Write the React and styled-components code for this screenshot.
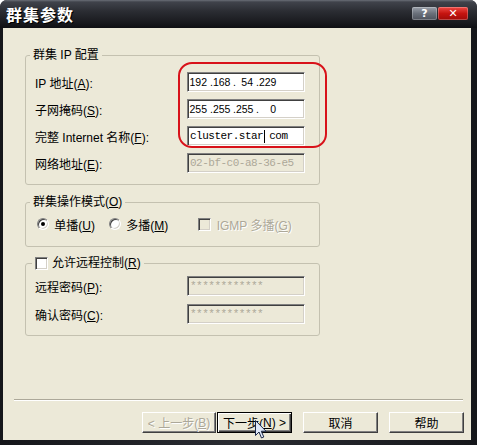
import React from 'react';
import styled, { createGlobalStyle } from 'styled-components';

const GlobalStyle = createGlobalStyle`
  html, body {
    margin: 0;
    padding: 0;
    background: #ffffff;
  }
`;

const Window = styled.div`
  position: relative;
  width: 477px;
  height: 445px;
  display: flex;
  flex-direction: column;
  background: linear-gradient(90deg, #15161a 0, #2a2c32 50%, #15161a 100%);
  border-radius: 7px 7px 0 0;
  overflow: hidden;
  font-family: "Liberation Sans", "Noto Sans CJK SC", sans-serif;
  font-size: 12px;
  color: #000;
`;

const TitleBar = styled.div`
  height: 28px;
  flex: none;
  display: flex;
  align-items: center;
  justify-content: space-between;
  padding: 0 9px 0 6px;
  background: linear-gradient(#6a6e77 0, #40434b 2px, #2b2d33 40%, #17181c 85%, #0f1013 100%);
`;

const Title = styled.div`
  color: #fff;
  font-family: "Noto Sans CJK SC", sans-serif;
  font-weight: bold;
  font-size: 16px;
  letter-spacing: 1px;
  text-shadow: 1px 1px 0 #000;
`;

const Controls = styled.div`
  display: flex;
  gap: 1px;
  margin-top: -2px;
`;

const CtlButton = styled.div`
  width: ${p => p.$w}px;
  height: 13px;
  display: flex;
  align-items: center;
  justify-content: center;
  border-radius: 2px;
  color: #fff;
  font-family: "DejaVu Sans", sans-serif;
  font-weight: bold;
  font-size: 11px;
  background: ${p =>
    p.$red
      ? 'linear-gradient(#f04a44, #c51410 50%, #a00a08)'
      : 'linear-gradient(#9aa0aa, #6a707a 50%, #4e535c)'};
  box-shadow: inset 0 0 0 1px rgba(255, 255, 255, 0.25);
`;

const Body = styled.div`
  flex: 1;
  margin: 0 6px 5px 3px;
  background: #ece9d8;
  display: flex;
  flex-direction: column;
  padding: 20px 0 7px 0;
`;

const Group = styled.fieldset`
  margin: ${p => p.$top}px 0 0 22px;
  width: 295px;
  box-sizing: border-box;
  border: 1px solid #c4c1b0;
  border-radius: 3px;
  padding: ${p => p.$pad};
  min-inline-size: auto;
`;

const Legend = styled.legend`
  display: flex;
  align-items: center;
  gap: 4px;
  line-height: 14px;
  height: 14px;
  padding: 0 3px;
  margin-left: ${p => p.$inset}px;
  white-space: pre;
`;

const FormGrid = styled.div`
  display: grid;
  grid-template-columns: 152px 118px;
  grid-auto-rows: 20px;
  row-gap: ${p => p.$gap}px;
  align-items: center;
`;

const Label = styled.div`
  white-space: pre;
`;

const Field = styled.div`
  height: 20px;
  box-sizing: border-box;
  border: 1px solid;
  border-color: #808080 #ffffff #ffffff #808080;
  box-shadow: inset 1px 1px #404040, inset -1px -1px #d4d0c8;
  background: ${p => (p.$disabled ? '#ece9d8' : '#ffffff')};
  color: ${p => (p.$disabled ? '#aca899' : '#000')};
  display: flex;
  align-items: center;
  padding: 0 2px;
  white-space: pre;
  font-family: ${p => (p.$mono ? '"Liberation Mono", monospace' : '"Liberation Sans", sans-serif')};
  font-size: ${p => (p.$mono ? 11 : 10.5)}px;
  letter-spacing: ${p => (p.$mono ? '-0.5px' : '0')};
`;

const IpSeg = styled.span`
  flex: none;
  width: ${p => (p.$first ? 20 : 23)}px;
  box-sizing: border-box;
  padding-right: 3px;
  display: flex;
  justify-content: ${p => (p.$first ? 'flex-end' : 'space-between')};
`;

const Caret = styled.span`
  display: inline-block;
  width: 1px;
  height: 13px;
  background: #000;
  margin: 0 4px 0 1px;
`;

const OptionRow = styled.div`
  display: flex;
  align-items: center;
  height: 14px;
`;

const Option = styled.label`
  display: flex;
  align-items: center;
  gap: 2px;
  margin-left: ${p => p.$left || 0}px;
  color: ${p => (p.$disabled ? '#aca899' : '#000')};
  text-shadow: ${p => (p.$disabled ? '1px 1px 0 #fff' : 'none')};
  white-space: pre;
`;

const Radio = styled.span`
  position: relative;
  width: 12px;
  height: 12px;
  box-sizing: border-box;
  border-radius: 50%;
  border: 1px solid;
  border-color: #808080 #ffffff #ffffff #808080;
  box-shadow: inset 1px 1px #404040, inset -1px -1px #d4d0c8;
  background: #fff;
  &::after {
    content: '';
    display: ${p => (p.$checked ? 'block' : 'none')};
    position: absolute;
    left: 3px;
    top: 3px;
    width: 4px;
    height: 4px;
    border-radius: 50%;
    background: #000;
  }
`;

const Check = styled.span`
  width: 13px;
  height: 13px;
  box-sizing: border-box;
  border: 1px solid;
  border-color: #808080 #ffffff #ffffff #808080;
  box-shadow: inset 1px 1px #404040, inset -1px -1px #d4d0c8;
  background: ${p => (p.$disabled ? '#ece9d8' : '#fff')};
`;

const Footer = styled.div`
  margin-top: auto;
  display: flex;
  flex-direction: column;
`;

const Separator = styled.div`
  margin: 0 8px 0 11px;
  border-top: 1px solid #aca899;
  border-bottom: 1px solid #fff;
`;

const ButtonRow = styled.div`
  display: flex;
  justify-content: flex-end;
  padding-right: 7px;
  margin-top: 11px;
`;

const Button = styled.div`
  width: ${p => p.$w || 75}px;
  height: 21px;
  box-sizing: border-box;
  margin-left: ${p => p.$gap || 0}px;
  display: flex;
  align-items: center;
  justify-content: center;
  background: #ece9d8;
  white-space: pre;
  border: 1px solid;
  border-color: ${p => (p.$default ? '#000' : '#fff #404040 #404040 #fff')};
  box-shadow: ${p =>
    p.$default
      ? 'inset 1px 1px #fff, inset -1px -1px #404040, inset -2px -2px #808080'
      : 'inset -1px -1px #808080'};
  color: ${p => (p.$disabled ? '#aca899' : '#000')};
  text-shadow: ${p => (p.$disabled ? '1px 1px 0 #fff' : 'none')};
`;

const Highlight = styled.div`
  position: absolute;
  left: 178px;
  top: 62px;
  width: 149px;
  height: 86px;
  box-sizing: border-box;
  border: 2px solid #d8121a;
  border-radius: 14px;
  pointer-events: none;
`;

const Pointer = styled.svg`
  position: absolute;
  left: 255px;
  top: 420px;
`;

function IpField({ parts }) {
  return (
    <Field>
      {parts.map((p, i) => (
        <IpSeg key={i} $first={i === 0}>
          {i > 0 && <span>.</span>}
          <span>{p}</span>
        </IpSeg>
      ))}
    </Field>
  );
}

export default function App() {
  return (
    <>
      <GlobalStyle />
      <Window>
        <TitleBar>
          <Title>群集参数</Title>
          <Controls>
            <CtlButton $w={25}>?</CtlButton>
            <CtlButton $w={30} $red>✕</CtlButton>
          </Controls>
        </TitleBar>
        <Body>
          <Group $top={0} $pad="10px 9px 11px 9px">
            <Legend $inset={-5}>群集 IP 配置</Legend>
            <FormGrid $gap={7}>
              <Label>IP 地址(<u>A</u>):</Label>
              <IpField parts={['192', '168', '54', '229']} />
              <Label>子网掩码(<u>S</u>):</Label>
              <IpField parts={['255', '255', '255', '0']} />
              <Label>完整 Internet 名称(<u>F</u>):</Label>
              <Field $mono>
                cluster.star<Caret />com
              </Field>
              <Label>网络地址(<u>E</u>):</Label>
              <Field $mono $disabled>02-bf-c0-a8-36-e5</Field>
            </FormGrid>
          </Group>

          <Group $top={10} $pad="8px 9px 15px 11px">
            <Legend $inset={-7}>
              <span>群集操作模式(<u>O</u>)</span>
            </Legend>
            <OptionRow>
              <Option>
                <Radio $checked />
                <span> 单播(<u>U</u>)</span>
              </Option>
              <Option $left={14}>
                <Radio />
                <span> 多播(<u>M</u>)</span>
              </Option>
              <Option $left={30} $disabled>
                <Check $disabled />
                <span> IGMP 多播(<u>G</u>)</span>
              </Option>
            </OptionRow>
          </Group>

          <Group $top={9} $pad="6px 9px 11px 9px">
            <Legend $inset={-3}>
              <Check />
              <span>允许远程控制(<u>R</u>)</span>
            </Legend>
            <FormGrid $gap={8}>
              <Label>远程密码(<u>P</u>):</Label>
              <Field $mono $disabled>************</Field>
              <Label>确认密码(<u>C</u>):</Label>
              <Field $mono $disabled>************</Field>
            </FormGrid>
          </Group>

          <Footer>
            <Separator />
            <ButtonRow>
              <Button $w={74} $disabled>&lt; 上一步(<u>B</u>)</Button>
              <Button $gap={1} $default>下一步(<u>N</u>) &gt;</Button>
              <Button $gap={11}>取消</Button>
              <Button $gap={11}>帮助</Button>
            </ButtonRow>
          </Footer>
        </Body>
        <Highlight />
        <Pointer width="12" height="19" viewBox="0 0 12 19">
          <path
            d="M0.5 0.5 L0.5 15.5 L4 12 L6.5 18 L8.8 17 L6.3 11.2 L11 11.2 Z"
            fill="#dfe8f8"
            stroke="#1c2a4a"
            strokeWidth="1"
          />
        </Pointer>
      </Window>
    </>
  );
}
